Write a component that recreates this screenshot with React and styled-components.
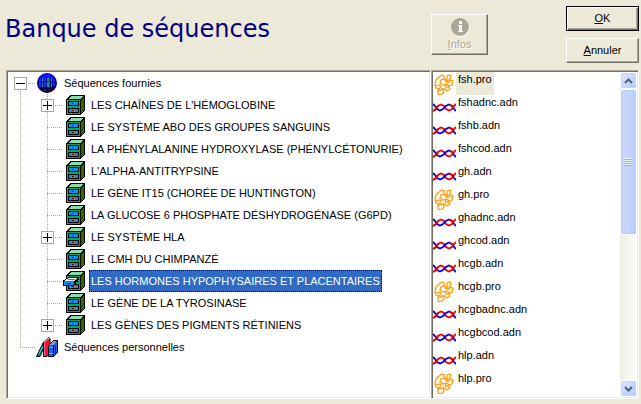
import React from 'react';
import styled, { createGlobalStyle, css } from 'styled-components';

const GlobalStyle = createGlobalStyle`
  * {
    box-sizing: border-box;
  }

  body {
    margin: 0;
    background: #ece9d8;
    color: #000;
    font: 11px/15px "Liberation Sans", Arial, sans-serif;
  }

  ul {
    list-style: none;
    margin: 0;
    padding: 0;
  }
`;

const Page = styled.div`
  display: flex;
  flex-direction: column;
  height: 100vh;
  padding: 6px 2px 5px 6px;
`;

const columns = css`
  display: grid;
  grid-template-columns: minmax(0, 1fr) 208px;
`;

const Header = styled.header`
  ${columns}
  height: 64px;
`;

const Title = styled.h1`
  margin: 8px 0 0 -1px;
  color: #000080;
  font: 24px/30px Verdana, "DejaVu Sans", sans-serif;
  white-space: nowrap;
`;

const Actions = styled.div`
  display: flex;
  justify-content: space-between;
  align-items: flex-start;
`;

const ButtonColumn = styled.div`
  display: flex;
  flex-direction: column;
  gap: 7px;
  width: 73px;
`;

const Button = styled.button`
  height: 25px;
  padding: 0;
  background: #ece9d8;
  border: 1px solid;
  border-color: #fff #716f64 #716f64 #fff;
  box-shadow: inset -1px -1px #aca899;
  color: #000;
  font: inherit;

  ${p => p.$default && css`
    border-color: #000;
    box-shadow: inset 1px 1px #fff, inset -1px -1px #716f64, inset -2px -2px #aca899;
  `}
`;

const InfoButton = styled(Button)`
  display: flex;
  flex-direction: column;
  align-items: center;
  width: 57px;
  height: 41px;
  margin-top: 8px;
  padding-top: 2px;
  color: #aca899;
  text-shadow: 1px 1px #fff;
`;

const Main = styled.main`
  ${columns}
  grid-template-rows: minmax(0, 1fr);
  flex: 1;
  min-height: 0;
`;

const Panel = styled.section`
  display: flex;
  min-width: 0;
  overflow: hidden;
  padding: 1px;
  background: #fff;
  border: 1px solid;
  border-color: #aca899 #fff #fff #aca899;
  box-shadow: inset 1px 1px #716f64, inset -1px -1px #f1efe2;
`;

const dotsDown = 'repeating-linear-gradient(to bottom, #aca899 0 1px, transparent 1px 2px)';
const dotsRight = 'repeating-linear-gradient(to right, #aca899 0 1px, transparent 1px 2px)';

const TreeRow = styled.div`
  display: flex;
  height: 22px;
`;

// connector cell: a vertical dotted line plus a branch to the right
const Gutter = styled.span`
  display: flex;
  align-items: center;
  flex: none;
  width: 27px;
  padding-left: 6px;
  background-repeat: no-repeat;
  background-image: ${dotsDown}, ${dotsRight};
  background-position: 12px ${p => (p.$from === 'middle' ? 11 : 0)}px, 12px 11px;
  background-size: 1px ${p => (p.$from || p.$to ? 11 : 22)}px, ${p => (p.$branch ? 15 : 0)}px 1px;
`;

const Expander = styled.button`
  width: 13px;
  height: 13px;
  padding: 0;
  background:
    linear-gradient(#000, #000) center / 9px 1px no-repeat,
    linear-gradient(#000, #000) center / 1px ${p => (p.$open ? 0 : 9)}px no-repeat,
    #fff;
  border: 1px solid #aca899;
`;

const TreeLabel = styled.span`
  height: 22px;
  padding: 0 2px;
  line-height: 22px;
  white-space: nowrap;

  ${p => p.$selected && css`
    background: #316ac5;
    color: #fff;
    outline: 1px dotted #000;
    outline-offset: -1px;
  `}
`;

const FileList = styled.ul`
  flex: 1;
  min-width: 0;
  overflow: hidden;
`;

const FileRow = styled.li`
  display: flex;
  height: 23px;
`;

const FileName = styled.span`
  padding: 0 2px;
  background: ${p => (p.$selected ? '#ece9d8' : 'transparent')};
`;

const Scrollbar = styled.div`
  display: flex;
  flex-direction: column;
  width: 17px;
  background: linear-gradient(to right, #eeede5, #fefefb);
`;

const ScrollButton = styled.button`
  display: flex;
  align-items: center;
  justify-content: center;
  flex: none;
  height: 17px;
  padding: 0;
  background: linear-gradient(135deg, #dce6fe, #b5c9f9);
  border: 1px solid #fff;
  border-radius: 3px;
  box-shadow: inset 0 0 0 1px #c3d3fd, inset -1px -1px #98b1e4;
`;

const Track = styled.div`
  flex: 1;
`;

const Thumb = styled.div`
  display: flex;
  align-items: center;
  justify-content: center;
  height: 50%;
  background: linear-gradient(to right, #c9d7fc, #c4d4ff 60%, #b4c8f8);
  border: 1px solid #fff;
  border-radius: 3px;
  box-shadow: inset 0 0 0 1px #bccdf8, inset -1px -1px #7b9fd9;
`;

const Grip = styled.span`
  width: 7px;
  height: 8px;
  background: repeating-linear-gradient(#eef4fe 0 1px, #8cb0f8 1px 2px);
`;

const GlobeIcon = () => (
  <svg width="27" height="22" viewBox="0 0 27 22" aria-hidden="true">
    <circle cx="12" cy="11" r="10" fill="#000070" />
    <path d="M8 2h8v2h3v3H5V4h3z" fill="#1010f0" />
    <path d="M4 7h2v8H4zM9 5h2v10H9zM14 4h1v12h-1zM18 7h2v7h-2z" fill="#2020ff" />
    <path d="M7 6h1v4H7zM7 11h1v4H7zM12 6h2v3h-2zM12 10h2v5h-2zM16 6h1v4h-1zM16 11h1v4h-1z" fill="#00a0a8" />
    <path d="M6 16h12l-2 3-4 2-4-2z" fill="#000020" />
    <path d="M9 17h2v2H9zM14 17h1v2h-1z" fill="#2020b0" />
  </svg>
);

const BooksIcon = () => (
  <svg width="27" height="22" viewBox="0 0 27 22" aria-hidden="true">
    <path d="M1.500 20.500L8 7l2 2-5 11.500z" fill="#009060" stroke="#000" />
    <path d="M4 18l4-8" stroke="#60d8d0" />
    <path d="M8.500 6l5.500-4.500 1 1v14l-3 4H8.500z" fill="#f01830" stroke="#000" />
    <path d="M9.500 7v13" stroke="#ff60b0" />
    <path d="M9 6l5-4" stroke="#d0d0d0" />
    <path d="M13.500 9.500l5-5h4v12l-4 4h-5z" fill="#1860f0" stroke="#000" />
    <path d="M14.500 9l4-4h3l-3 4z" fill="#a0a0a0" />
    <path d="M18.500 9.500v11" stroke="#000" />
    <path d="M14 11.500h4M14 17.500h4" stroke="#60b8ff" />
    <path d="M20.500 9v9" stroke="#0828b0" />
  </svg>
);

const CabinetIcon = ({ open }) => (
  <svg width="27" height="22" viewBox="0 0 27 22" shapeRendering="crispEdges" aria-hidden="true">
    <path d="M4 5l5-4h14v15l-4 5H4z" fill="#000" />
    <path d="M6 5l4-3h12l-4 3z" fill="#80e0b0" />
    <path d="M19 6l3-3v13l-3 3z" fill="#306800" />
    <path d="M5 6h13v14H5z" fill="#00a860" />
    <path d="M5 6h1v14H5z" fill="#00d000" />
    <path d="M6 7h11v5H6zM6 14h11v5H6z" fill="#000" />
    <path d="M7 8h9v3H7zM7 15h9v3H7z" fill="#0090ff" />
    <path d="M10 9h3v1h-3zM10 16h3v1h-3z" fill="#202050" />
    <path d="M12 9h1v1h-1zM12 16h1v1h-1z" fill="#e08030" />
    {open && (
      <g>
        <path d="M7 7h10v4H7z" fill="#80e0b0" />
        <path d="M1 10h1l5-3h10v2l-5 7H1z" fill="#000" />
        <path d="M3 10l4-2h9l-4 3H3z" fill="#f0f0f0" />
        <path d="M6 9h7v1H6z" fill="#e020e0" />
        <path d="M2 11h10v4H2z" fill="#0090ff" />
        <path d="M5 13h4v1H5z" fill="#002060" />
      </g>
    )}
  </svg>
);

const DnaIcon = () => (
  <svg width="23" height="23" viewBox="0 0 23 23" fill="none" strokeWidth="1.800" aria-hidden="true">
    <path d="M0 16L3 14 5 11 8 9.500 11 11 13 14 16 15.500 19 14 21 11 23 9" stroke="#f00000" />
    <path d="M0 9L2 11 4 14 7 15.500 10 14 13 11 16 9.500 19 11 21 14 23 16" stroke="#0000f0" />
    <path d="M0 16L3 14 5 11M16 9.500L19 11 20 13" stroke="#f00000" />
  </svg>
);

const ProteinIcon = () => (
  <svg width="23" height="23" viewBox="0 0 23 23" fill="none" stroke="#ff9c08" strokeWidth="1.300" aria-hidden="true">
    <path d="M6 5l3-2 2 1v3l1 1 2-1V4l3-1 1 2-2 3-3 1v1h3l2-2 2 1-1 4-3 1-2-2-2 1 1 2h3l1 2-3 2-2-2h-2l1 3-3 3-3-1v-4h3l1-2" />
    <path d="M6 5L3 8l-1 5 1 3 3 1 2-3-2-1-3 1M11 7L8 8l-1 3 3 2 3-1" />
  </svg>
);

const Chevron = ({ up }) => (
  <svg width="9" height="6" viewBox="0 0 9 6" fill="none" stroke="#4d6185" strokeWidth="2" aria-hidden="true">
    <path d={up ? 'M1 5l3.500-3.500L8 5' : 'M1 1l3.500 3.500L8 1'} />
  </svg>
);

const banks = [
  { name: "LES CHAÎNES DE L'HÉMOGLOBINE", expandable: true },
  { name: 'LE SYSTÈME ABO DES GROUPES SANGUINS' },
  { name: 'LA PHÉNYLALANINE HYDROXYLASE (PHÉNYLCÉTONURIE)' },
  { name: "L'ALPHA-ANTITRYPSINE" },
  { name: 'LE GÈNE IT15 (CHORÉE DE HUNTINGTON)' },
  { name: 'LA GLUCOSE 6 PHOSPHATE DÉSHYDROGÉNASE (G6PD)' },
  { name: 'LE SYSTÈME HLA', expandable: true },
  { name: 'LE CMH DU CHIMPANZÉ' },
  { name: 'LES HORMONES HYPOPHYSAIRES ET PLACENTAIRES', selected: true },
  { name: 'LE GÈNE DE LA TYROSINASE' },
  { name: 'LES GÈNES DES PIGMENTS RÉTINIENS', expandable: true },
];

const files = [
  'fsh.pro', 'fshadnc.adn', 'fshb.adn', 'fshcod.adn', 'gh.adn',
  'gh.pro', 'ghadnc.adn', 'ghcod.adn', 'hcgb.adn', 'hcgb.pro',
  'hcgbadnc.adn', 'hcgbcod.adn', 'hlp.adn', 'hlp.pro', 'hlpadnc.adn',
];

const BankTree = () => (
  <Panel>
    <ul>
      <li>
        <TreeRow>
          <Gutter $from="middle" $branch>
            <Expander $open aria-label="Réduire" />
          </Gutter>
          <GlobeIcon />
          <TreeLabel>Séquences fournies</TreeLabel>
        </TreeRow>
        <ul>
          {banks.map((bank, i) => (
            <li key={bank.name}>
              <TreeRow>
                <Gutter />
                <Gutter $to={i === banks.length - 1 ? 'middle' : undefined} $branch>
                  {bank.expandable && <Expander aria-label="Développer" />}
                </Gutter>
                <CabinetIcon open={bank.selected} />
                <TreeLabel $selected={bank.selected}>{bank.name}</TreeLabel>
              </TreeRow>
            </li>
          ))}
        </ul>
      </li>
      <li>
        <TreeRow>
          <Gutter $to="middle" $branch />
          <BooksIcon />
          <TreeLabel>Séquences personnelles</TreeLabel>
        </TreeRow>
      </li>
    </ul>
  </Panel>
);

const App = () => {
  return (
    <Page>
      <GlobalStyle />
      <Header>
        <Title>Banque de séquences</Title>
        <Actions>
          <InfoButton disabled>
            <svg width="20" height="20" viewBox="0 0 20 20" aria-hidden="true">
              <circle cx="11" cy="11" r="9" fill="#fff" />
              <circle cx="10" cy="10" r="9" fill="#aca899" />
              <path d="M9 4h3v3H9zM8 8h4v6h1v1H8v-1h1V9H8z" fill="#fff" />
            </svg>
            <span><u>I</u>nfos</span>
          </InfoButton>
          <ButtonColumn>
            <Button $default><u>O</u>K</Button>
            <Button><u>A</u>nnuler</Button>
          </ButtonColumn>
        </Actions>
      </Header>
      <Main>
        <BankTree />
        <Panel>
          <FileList>
            {files.map((file, i) => (
              <FileRow key={file}>
                {file.endsWith('.pro') ? <ProteinIcon /> : <DnaIcon />}
                <FileName $selected={i === 0}>{file}</FileName>
              </FileRow>
            ))}
          </FileList>
          <Scrollbar>
            <ScrollButton aria-label="Défiler vers le haut"><Chevron up /></ScrollButton>
            <Track>
              <Thumb><Grip /></Thumb>
            </Track>
            <ScrollButton aria-label="Défiler vers le bas"><Chevron /></ScrollButton>
          </Scrollbar>
        </Panel>
      </Main>
    </Page>
  );
};

export default App;
